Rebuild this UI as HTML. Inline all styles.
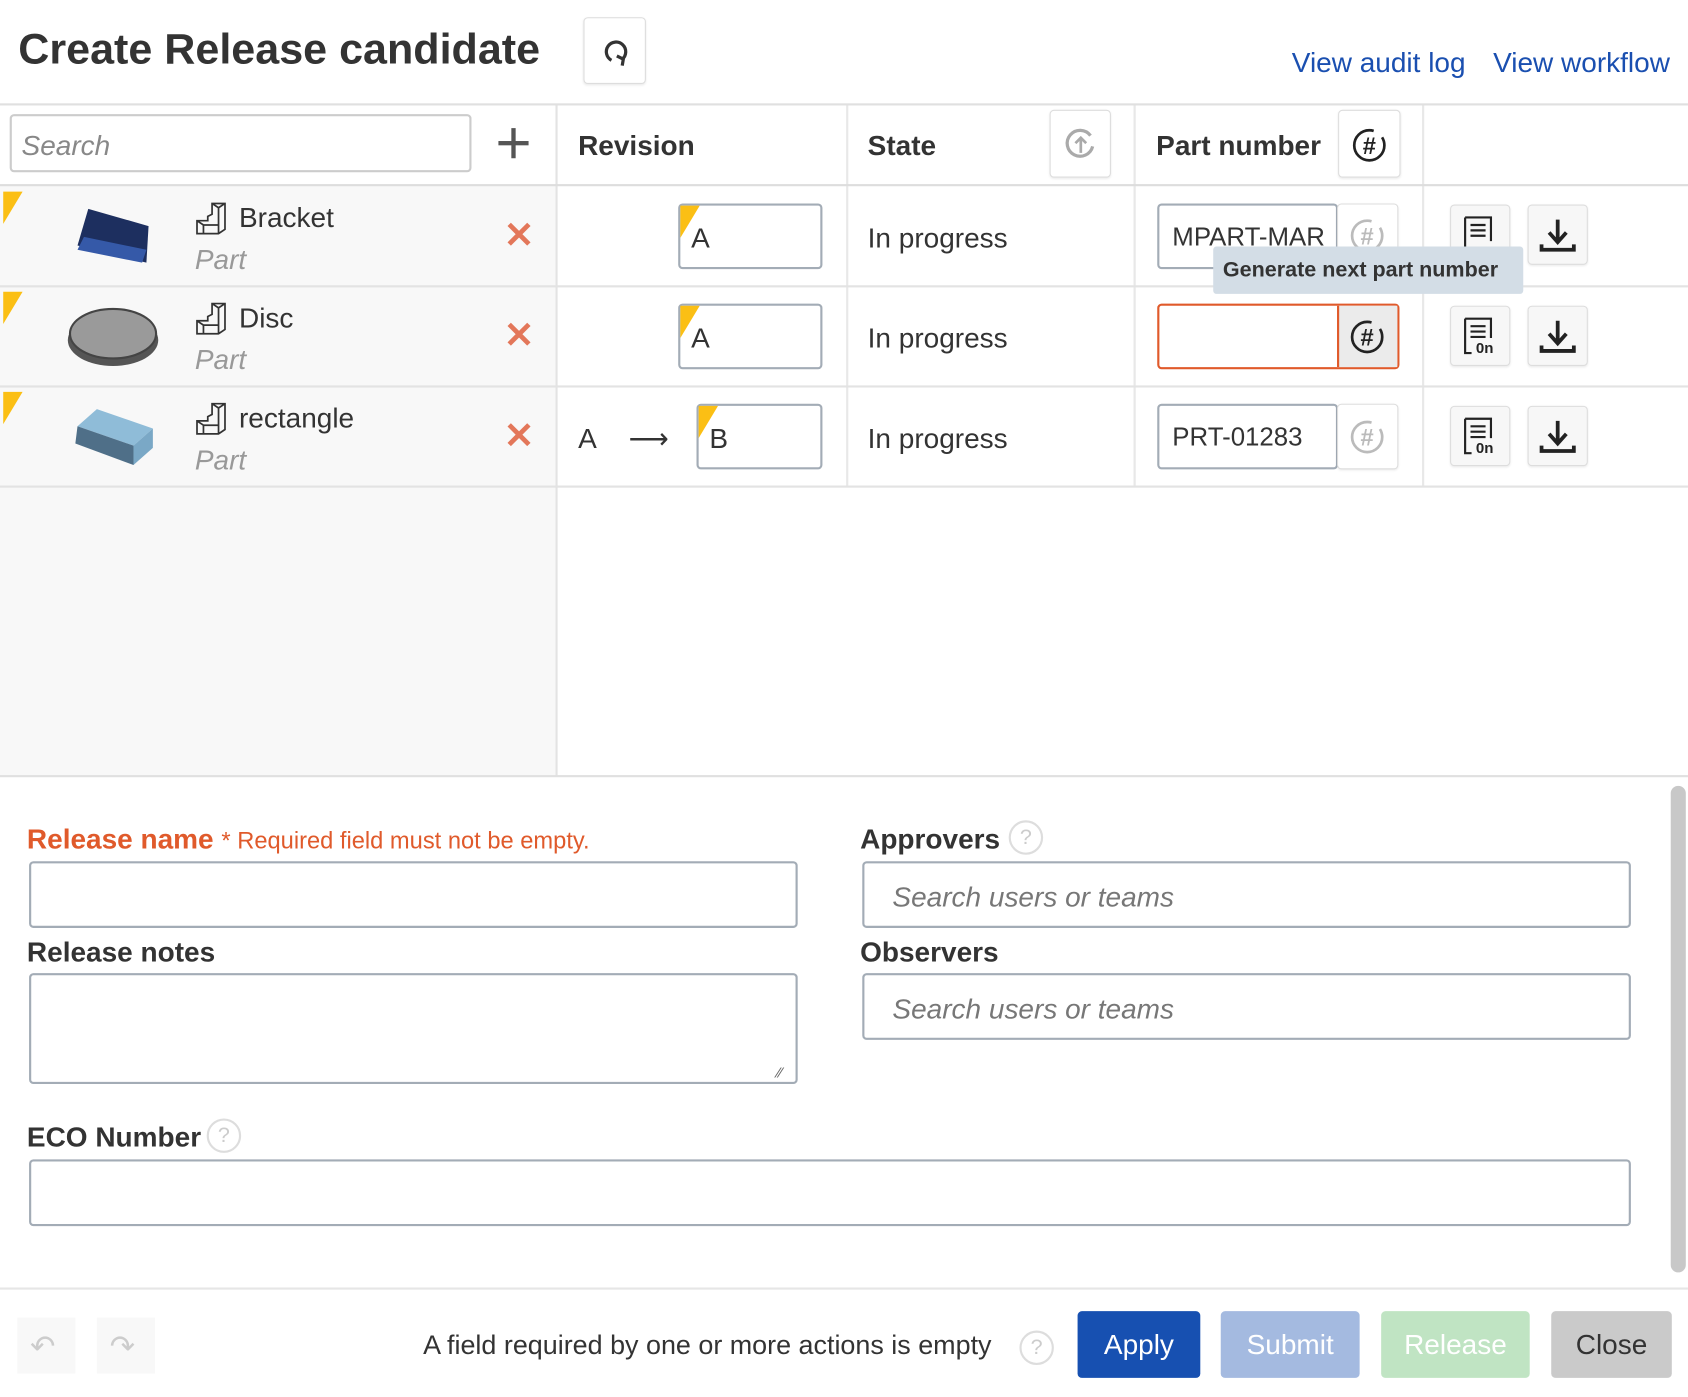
<!DOCTYPE html>
<html><head><meta charset="utf-8"><style>
*{box-sizing:border-box;margin:0;padding:0}
html,body{width:1688px;height:1396px;overflow:hidden;background:#fff}
#w{position:absolute;left:0;top:0;width:1568px;height:1298px;transform:scale(1.0765);transform-origin:0 0;font-family:"Liberation Sans Narrow","Liberation Sans",sans-serif;color:#333}
.a{position:absolute}
.t{font-size:26px;white-space:nowrap}
.b{font-weight:bold}
.box{position:absolute;border:2px solid #a3acb6;border-radius:4px;background:#fff}
.btn{position:absolute;border:1px solid #ddd;border-radius:4px;background:#f7f7f7;box-shadow:0 1px 2px rgba(0,0,0,.08)}
.tri{position:absolute;width:0;height:0;border-top:30px solid #fbbf14;border-right:18px solid transparent}
.x{position:absolute;color:#e3775a;font-size:34px;font-weight:bold;font-family:"Liberation Sans",sans-serif}
.ph{color:#777;font-style:italic}
</style></head><body><div id="w">
<div class="a b" style="left:17px;top:24px;font-size:40px;color:#333;white-space:nowrap">Create Release candidate</div>
<div class="btn" style="left:542px;top:16px;width:58px;height:62px;background:#fff"><svg class="a" style="left:15px;top:17px" width="28" height="28" viewBox="0 0 28 28"><path d="M10 22 A9 9 0 1 1 20 21" fill="none" stroke="#333" stroke-width="3"/><path d="M15 18 l6 3 l-1 6" fill="none" stroke="#333" stroke-width="3"/></svg></div>
<div class="a t" style="left:1200px;top:43px;color:#1a4fb0">View audit log</div>
<div class="a t" style="left:1387px;top:43px;color:#1a4fb0">View workflow</div>
<div class="a" style="left:0;top:96px;width:1568px;height:2px;background:#e0e0e0"></div>
<div class="a" style="left:0;top:98px;width:516px;height:623px;background:#f8f8f8"></div>
<div class="a" style="left:516px;top:98px;width:2px;height:623px;background:#e3e3e3"></div>
<div class="a" style="left:786px;top:98px;width:2px;height:354px;background:#e8e8e8"></div>
<div class="a" style="left:1053px;top:98px;width:2px;height:354px;background:#e8e8e8"></div>
<div class="a" style="left:1321px;top:98px;width:2px;height:354px;background:#e8e8e8"></div>
<div class="a" style="left:0;top:98px;width:516px;height:74px;background:#fff"></div>
<div class="box" style="left:9px;top:106px;width:429px;height:54px;border-color:#ccc"></div>
<div class="a t ph" style="left:20px;top:120px;color:#888">Search</div>
<div class="a" style="left:463px;top:131px;width:28px;height:4px;background:#555"></div>
<div class="a" style="left:475px;top:119px;width:4px;height:28px;background:#555"></div>
<div class="a t b" style="left:537px;top:120px">Revision</div>
<div class="a t b" style="left:806px;top:120px">State</div>
<div class="btn" style="left:975px;top:102px;width:57px;height:63px;background:#fff"><svg class="a" style="left:12px;top:15px" width="32" height="32"><path d="M25 8 A12 12 0 1 0 27 18" fill="none" stroke="#aaa" stroke-width="3"/><path d="M16 24 V10 M11 15 l5-5 5 5" fill="none" stroke="#aaa" stroke-width="2.5"/></svg></div>
<div class="a t b" style="left:1074px;top:120px">Part number</div>
<div class="btn" style="left:1243px;top:102px;width:58px;height:63px;background:#fff"><svg class="a" style="left:11px;top:15px" width="34" height="34"><circle cx="17" cy="17" r="14" fill="none" stroke="#222" stroke-width="2.5" stroke-dasharray="70 10"/><text x="17" y="25" text-anchor="middle" font-size="22" font-weight="bold" font-family="Liberation Sans" fill="#222">#</text></svg></div>
<div class="a" style="left:0;top:171px;width:1568px;height:2px;background:#ddd"></div>
<div class="a" style="left:0;top:265px;width:1568px;height:2px;background:#e3e3e3"></div>
<div class="a" style="left:0;top:358px;width:1568px;height:2px;background:#e3e3e3"></div>
<div class="a" style="left:0;top:451px;width:1568px;height:2px;background:#e3e3e3"></div>
<div class="a" style="left:0;top:720px;width:1568px;height:2px;background:#e0e0e0"></div>

<div class="tri" style="left:3px;top:178px"></div>
<div class="tri" style="left:3px;top:271px"></div>
<div class="tri" style="left:3px;top:364px"></div>
<svg class="a" style="left:70px;top:192px" width="70" height="56"><polygon points="12,2 68,18 66,52 2,36" fill="#1d2f5f"/><polygon points="8,28 66,40 62,52 2,40" fill="#3559a8"/></svg>
<svg class="a" style="left:62px;top:282px" width="88" height="60"><ellipse cx="43" cy="34" rx="42" ry="24" fill="#555"/><ellipse cx="43" cy="28" rx="40" ry="23" fill="#9a9a9a" stroke="#444" stroke-width="2"/></svg>
<svg class="a" style="left:68px;top:378px" width="76" height="56"><polygon points="22,2 74,20 56,36 4,18" fill="#8fbcd8"/><polygon points="4,18 56,36 56,54 2,34" fill="#4f6f88"/><polygon points="56,36 74,20 74,38 56,54" fill="#7aa8c6"/></svg>
<div class="a t" style="left:222px;top:187px">Bracket</div>
<div class="a t ph" style="left:181px;top:226px;color:#999">Part</div>
<div class="a t" style="left:222px;top:280px">Disc</div>
<div class="a t ph" style="left:181px;top:319px;color:#999">Part</div>
<div class="a t" style="left:222px;top:373px">rectangle</div>
<div class="a t ph" style="left:181px;top:412px;color:#999">Part</div>
<svg class="a" style="left:181px;top:187px" width="34" height="34"><path d="M2 18 h10 v-4 l4-2 v-10 h12 v24 l-6 4 h-20 z M2 18 l6 4 v8 M8 22 h14 M22 30 v-24 l-6-4 M28 2 l-6 4" fill="none" stroke="#333" stroke-width="1.6"/></svg>
<svg class="a" style="left:181px;top:280px" width="34" height="34"><path d="M2 18 h10 v-4 l4-2 v-10 h12 v24 l-6 4 h-20 z M2 18 l6 4 v8 M8 22 h14 M22 30 v-24 l-6-4 M28 2 l-6 4" fill="none" stroke="#333" stroke-width="1.6"/></svg>
<svg class="a" style="left:181px;top:373px" width="34" height="34"><path d="M2 18 h10 v-4 l4-2 v-10 h12 v24 l-6 4 h-20 z M2 18 l6 4 v8 M8 22 h14 M22 30 v-24 l-6-4 M28 2 l-6 4" fill="none" stroke="#333" stroke-width="1.6"/></svg>
<div class="x" style="left:468px;top:199px">✕</div>
<div class="x" style="left:468px;top:292px">✕</div>
<div class="x" style="left:468px;top:385px">✕</div>

<div class="box" style="left:630px;top:189px;width:134px;height:61px"></div><div class="tri" style="left:632px;top:191px"></div><div class="a t" style="left:642px;top:206px">A</div>
<div class="box" style="left:630px;top:282px;width:134px;height:61px"></div><div class="tri" style="left:632px;top:284px"></div><div class="a t" style="left:642px;top:299px">A</div>
<div class="a t" style="left:537px;top:392px">A</div><div class="a t" style="left:584px;top:392px">⟶</div>
<div class="box" style="left:647px;top:375px;width:117px;height:61px"></div><div class="tri" style="left:649px;top:377px"></div><div class="a t" style="left:659px;top:392px">B</div>

<div class="a t" style="left:806px;top:206px">In progress</div>
<div class="a t" style="left:806px;top:299px">In progress</div>
<div class="a t" style="left:806px;top:392px">In progress</div>

<div class="box" style="left:1075px;top:189px;width:168px;height:61px;overflow:hidden"><div class="a t" style="left:12px;top:16px;font-size:24px">MPART-MAR</div></div>
<div class="btn" style="left:1242px;top:189px;width:57px;height:61px;background:#fff"></div>
<svg class="a" style="left:1253px;top:202px" width="34" height="34"><circle cx="17" cy="17" r="14" fill="none" stroke="#bbb" stroke-width="2.5" stroke-dasharray="70 10"/><text x="17" y="25" text-anchor="middle" font-size="22" font-weight="bold" font-family="Liberation Sans" fill="#bbb">#</text></svg>
<div class="box" style="left:1075px;top:282px;width:225px;height:61px;border-color:#e05a2b"></div>
<div class="a" style="left:1242px;top:284px;width:56px;height:57px;background:#ebebeb;border-left:2px solid #e05a2b"></div>
<svg class="a" style="left:1253px;top:296px" width="34" height="34"><circle cx="17" cy="17" r="14" fill="none" stroke="#222" stroke-width="2.5" stroke-dasharray="70 10"/><text x="17" y="25" text-anchor="middle" font-size="22" font-weight="bold" font-family="Liberation Sans" fill="#222">#</text></svg>
<div class="box" style="left:1075px;top:375px;width:168px;height:61px"><div class="a t" style="left:12px;top:16px;font-size:24px">PRT-01283</div></div>
<div class="btn" style="left:1242px;top:375px;width:57px;height:61px;background:#fff"></div>
<svg class="a" style="left:1253px;top:389px" width="34" height="34"><circle cx="17" cy="17" r="14" fill="none" stroke="#bbb" stroke-width="2.5" stroke-dasharray="70 10"/><text x="17" y="25" text-anchor="middle" font-size="22" font-weight="bold" font-family="Liberation Sans" fill="#bbb">#</text></svg>

<div class="btn" style="left:1347px;top:190px;width:56px;height:56px"></div><div class="btn" style="left:1419px;top:190px;width:56px;height:56px"></div>
<div class="btn" style="left:1347px;top:284px;width:56px;height:56px"></div><div class="btn" style="left:1419px;top:284px;width:56px;height:56px"></div>
<div class="btn" style="left:1347px;top:377px;width:56px;height:56px"></div><div class="btn" style="left:1419px;top:377px;width:56px;height:56px"></div>
<svg class="a" style="left:1358px;top:200px" width="36" height="36"><path d="M3 2 h24 v22 M3 2 v32 h6 M8 9 h14 M8 14 h14 M8 19 h14" fill="none" stroke="#222" stroke-width="2"/></svg>
<svg class="a" style="left:1358px;top:294px" width="36" height="36"><path d="M3 2 h24 v18 M3 2 v32 h6 M8 9 h14 M8 14 h14 M8 19 h14" fill="none" stroke="#222" stroke-width="2"/><text x="13" y="34" font-size="14" font-weight="bold" font-family="Liberation Sans" fill="#222">0n</text></svg>
<svg class="a" style="left:1358px;top:387px" width="36" height="36"><path d="M3 2 h24 v18 M3 2 v32 h6 M8 9 h14 M8 14 h14 M8 19 h14" fill="none" stroke="#222" stroke-width="2"/><text x="13" y="34" font-size="14" font-weight="bold" font-family="Liberation Sans" fill="#222">0n</text></svg>
<svg class="a" style="left:1429px;top:200px" width="36" height="36"><path d="M18 4 v20 M10 16 l8 9 8-9 M3 27 v5 h30 v-5" fill="none" stroke="#222" stroke-width="3.5"/></svg>
<svg class="a" style="left:1429px;top:294px" width="36" height="36"><path d="M18 4 v20 M10 16 l8 9 8-9 M3 27 v5 h30 v-5" fill="none" stroke="#222" stroke-width="3.5"/></svg>
<svg class="a" style="left:1429px;top:387px" width="36" height="36"><path d="M18 4 v20 M10 16 l8 9 8-9 M3 27 v5 h30 v-5" fill="none" stroke="#222" stroke-width="3.5"/></svg>

<div class="a" style="left:1127px;top:229px;width:288px;height:44px;background:#d3dde6;border-radius:3px"></div>
<div class="a b" style="left:1136px;top:240px;font-size:20px;color:#333;white-space:nowrap">Generate next part number</div>

<div class="a t" style="left:25px;top:764px"><span class="b" style="color:#e05a2b">Release name</span> <span style="color:#e05a2b;font-size:22px">* Required field must not be empty.</span></div>
<div class="box" style="left:27px;top:800px;width:714px;height:62px"></div>
<div class="a t b" style="left:25px;top:869px">Release notes</div>
<div class="box" style="left:27px;top:904px;width:714px;height:103px"></div>
<div class="a" style="left:722px;top:988px;font-size:14px;color:#666">⁄⁄</div>
<div class="a t b" style="left:799px;top:764px">Approvers</div>
<div class="a" style="left:937px;top:762px;width:32px;height:32px;border:2px solid #ddd;border-radius:50%;color:#ccc;font-size:20px;text-align:center;line-height:28px">?</div>
<div class="box" style="left:801px;top:800px;width:714px;height:62px"><div class="a t ph" style="left:26px;top:16px">Search users or teams</div></div>
<div class="a t b" style="left:799px;top:869px">Observers</div>
<div class="box" style="left:801px;top:904px;width:714px;height:62px"><div class="a t ph" style="left:26px;top:16px">Search users or teams</div></div>
<div class="a t b" style="left:25px;top:1041px">ECO Number</div>
<div class="a" style="left:192px;top:1039px;width:32px;height:32px;border:2px solid #ddd;border-radius:50%;color:#ccc;font-size:20px;text-align:center;line-height:28px">?</div>
<div class="box" style="left:27px;top:1077px;width:1488px;height:62px"></div>
<div class="a" style="left:1552px;top:730px;width:14px;height:452px;background:#c8c8c8;border-radius:7px"></div>
<div class="a" style="left:0;top:1196px;width:1568px;height:2px;background:#e6e6e6"></div>

<div class="a" style="left:16px;top:1224px;width:54px;height:52px;background:#f8f8f8"></div>
<div class="a" style="left:90px;top:1224px;width:54px;height:52px;background:#f8f8f8"></div>
<div class="a" style="left:28px;top:1234px;font-size:28px;color:#ccc;font-family:'DejaVu Sans'">↶</div>
<div class="a" style="left:102px;top:1234px;font-size:28px;color:#ccc;font-family:'DejaVu Sans'">↷</div>
<div class="a t" style="left:393px;top:1236px;font-size:25px">A field required by one or more actions is empty</div>
<div class="a" style="left:947px;top:1236px;width:32px;height:32px;border:2px solid #ddd;border-radius:50%;color:#ccc;font-size:20px;text-align:center;line-height:28px">?</div>
<div class="a t" style="left:1001px;top:1218px;width:114px;height:62px;background:#1750b1;color:#fff;border-radius:4px;text-align:center;line-height:62px">Apply</div>
<div class="a t" style="left:1134px;top:1218px;width:129px;height:62px;background:#a4bae0;color:#fff;border-radius:4px;text-align:center;line-height:62px">Submit</div>
<div class="a t" style="left:1283px;top:1218px;width:138px;height:62px;background:#c0e4c3;color:#fff;border-radius:4px;text-align:center;line-height:62px">Release</div>
<div class="a t" style="left:1441px;top:1218px;width:112px;height:62px;background:#cacaca;color:#333;border-radius:4px;text-align:center;line-height:62px">Close</div>
</div></body></html>
